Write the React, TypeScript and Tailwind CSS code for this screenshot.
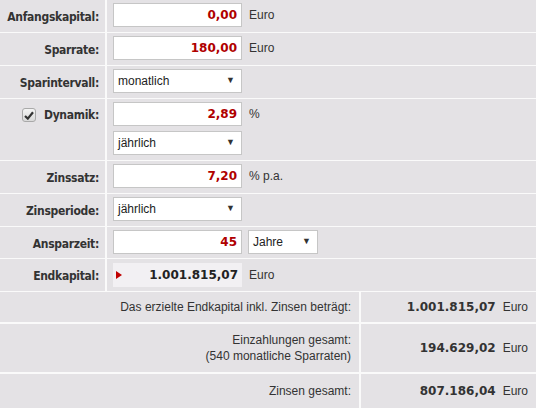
const label = "font-['DejaVu_Sans_Condensed','DejaVu_Sans',sans-serif] font-bold text-[12px] tracking-[-0.3px] text-[#333]";
const num = "font-['DejaVu_Sans',sans-serif] font-bold text-[12px]";

const Input = ({ value }: { value: string }) => (
  <div className={`w-[129px] h-[24px] bg-white border border-[#c6c6c6] flex items-center justify-end pr-[4px] text-[#b00000] ${num}`}>
    {value}
  </div>
);

const Select = ({ value, w = "w-[129px]" }: { value: string; w?: string }) => (
  <div className={`${w} h-[24px] bg-white border border-[#c6c6c6] flex items-center justify-between pl-[4px] pr-[6px] text-[12px] text-[#222]`}>
    <span>{value}</span>
    <span className="text-[9px] text-[#333]">▼</span>
  </div>
);

const Row = ({ lbl, children, h = "h-[33px]" }: { lbl: React.ReactNode; children: React.ReactNode; h?: string }) => (
  <div className={`flex ${h} border-b border-[#fafafa]`}>
    <div className={`w-[107px] shrink-0 border-r-2 border-[#fafafa] flex justify-end items-start pt-[8px] pr-[6px] ${label}`}>{lbl}</div>
    <div className="flex-1 pl-[6px] pt-[3px]">{children}</div>
  </div>
);

const Unit = ({ children }: { children: React.ReactNode }) => (
  <span className="ml-[7px] text-[12px] text-[#333]">{children}</span>
);

export default function App() {
  return (
    <div className="w-[536px] h-[408px] bg-[#e4e2e5] font-['Liberation_Sans',Arial,sans-serif] overflow-hidden">
      <Row lbl="Anfangskapital:">
        <div className="flex items-center"><Input value="0,00" /><Unit>Euro</Unit></div>
      </Row>
      <Row lbl="Sparrate:">
        <div className="flex items-center"><Input value="180,00" /><Unit>Euro</Unit></div>
      </Row>
      <Row lbl="Sparintervall:">
        <Select value="monatlich" />
      </Row>
      <Row
        h="h-[62px]"
        lbl={
          <div className="flex items-center gap-[8px] -mt-[1px]">
            <span className="w-[14px] h-[14px] rounded-[3px] border border-[#a9a9a9] bg-gradient-to-b from-[#f4f4f4] to-[#d9d9d9] flex items-center justify-center">
              <svg width="10" height="9" viewBox="0 0 10 9">
                <path d="M1 5 L3.8 7.6 L9 1.2" stroke="#333" strokeWidth="2.2" fill="none" />
              </svg>
            </span>
            <span>Dynamik:</span>
          </div>
        }
      >
        <div className="flex flex-col gap-[5px]">
          <div className="flex items-center"><Input value="2,89" /><Unit>%</Unit></div>
          <Select value="jährlich" />
        </div>
      </Row>
      <Row lbl="Zinssatz:">
        <div className="flex items-center"><Input value="7,20" /><Unit>% p.a.</Unit></div>
      </Row>
      <Row lbl="Zinsperiode:">
        <Select value="jährlich" />
      </Row>
      <Row h="h-[32px]" lbl="Ansparzeit:">
        <div className="flex items-center gap-[6px]"><Input value="45" /><Select value="Jahre" w="w-[70px]" /></div>
      </Row>
      <Row lbl="Endkapital:">
        <div className="flex items-center">
          <div className={`w-[129px] h-[24px] mt-[1px] bg-[#f2f0f3] flex items-center justify-between pl-[3px] pr-[4px] text-[#222] ${num}`}>
            <svg width="6" height="8" viewBox="0 0 6 8"><path d="M0 0 L6 4 L0 8 Z" fill="#c00000" /></svg>
            <span>1.001.815,07</span>
          </div>
          <Unit>Euro</Unit>
        </div>
      </Row>
      <div className="flex h-[32px] border-b-2 border-[#fafafa] text-[12px] text-[#333]">
        <div className="w-[361px] shrink-0 border-r-2 border-[#fafafa] flex items-center justify-end pr-[8px]">Das erzielte Endkapital inkl. Zinsen beträgt:</div>
        <div className="flex-1 flex items-center justify-end pr-[8px]"><span className={num}>1.001.815,07</span><Unit>Euro</Unit></div>
      </div>
      <div className="flex h-[50px] border-b-2 border-[#fafafa] text-[12px] text-[#333]">
        <div className="w-[361px] shrink-0 border-r-2 border-[#fafafa] flex flex-col items-end justify-center pr-[8px] leading-[16px] text-right">
          <span>Einzahlungen gesamt:</span>
          <span>(540 monatliche Sparraten)</span>
        </div>
        <div className="flex-1 flex items-center justify-end pr-[8px]"><span className={num}>194.629,02</span><Unit>Euro</Unit></div>
      </div>
      <div className="flex h-[34px] text-[12px] text-[#333]">
        <div className="w-[361px] shrink-0 border-r-2 border-[#fafafa] flex items-center justify-end pr-[8px]">Zinsen gesamt:</div>
        <div className="flex-1 flex items-center justify-end pr-[8px]"><span className={num}>807.186,04</span><Unit>Euro</Unit></div>
      </div>
    </div>
  );
}
